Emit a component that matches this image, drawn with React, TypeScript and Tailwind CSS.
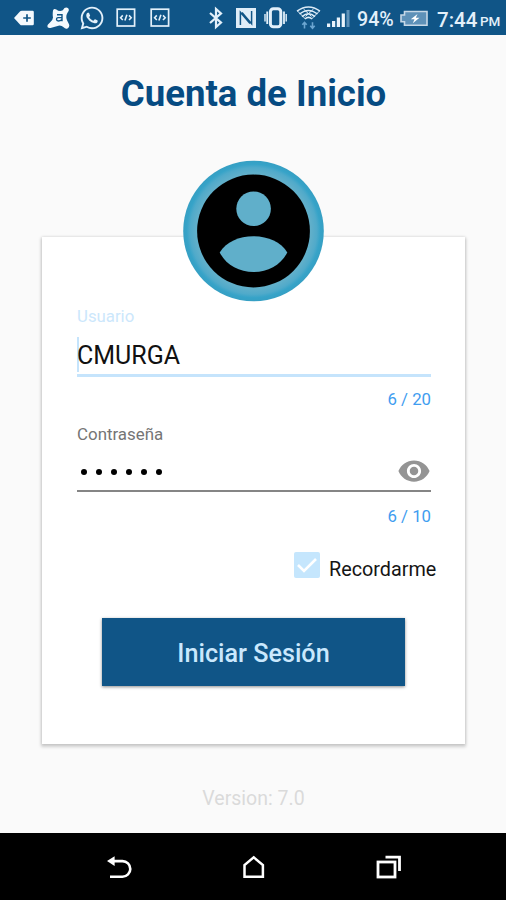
import React from "react";
import { FaWhatsapp } from "react-icons/fa";
import { MdRemoveRedEye } from "react-icons/md";

function CodeIcon({ className }: { className: string }) {
  return (
    <svg className={className} width="20" height="20" viewBox="0 0 20 20" fill="none" stroke="#e3f0fa">
      <rect x="1.2" y="1.2" width="17.4" height="16.8" strokeWidth="1.7" />
      <path d="M6.8 7.4 4.6 9.7 6.8 12M13 7.4 15.2 9.7 13 12M8.9 12.6 10.9 6.8" strokeWidth="1.6" />
    </svg>
  );
}

function StatusBar() {
  return (
    <div className="flex h-[35px] items-center bg-[#105587] pt-px text-[#e3f0fa]">
      <svg className="ml-[14px] shrink-0" width="20" height="16" viewBox="0 0 20 16">
        <path d="M0 8 6.2 1.3Q6.8.7 7.8.7H18.6Q19.8.7 19.8 2V14Q19.8 15.3 18.6 15.3H7.8Q6.8 15.3 6.2 14.7Z" fill="#f4f9fd" />
        <path d="M13 4.2V11.8M9.2 8H16.8" stroke="#105587" strokeWidth="1.7" />
      </svg>
      <svg className="ml-[13px] shrink-0" width="23" height="23" viewBox="0 0 23 23">
        <path d="M6 3.4Q7 1.2 9.3 2.5Q12.6 5.2 15.8 3.3L17.5 1Q19.5-.2 21.2 1.3Q22.7 3.3 20.8 5.3L20 6.8Q18.6 10 20 13.2L22 17.3Q23 20.2 20.5 21.5Q18.4 22.4 16.6 20.3Q14.5 18.2 11.5 18.7L3.5 21Q.3 21.5.3 19Q.3 17.4 3 15.4Q5.8 13.5 6 10.5Q5.4 7.5 6 3.4Z" fill="#f4f9fd" />
        <path d="M10 7.8H15V14.2M15 10.6H11Q9.4 10.8 9.5 12.3Q9.6 14 11.3 14Q13.4 14 15 12.4" fill="none" stroke="#105587" strokeWidth="1.4" />
      </svg>
      <FaWhatsapp className="ml-[9px] shrink-0" size={26} />
      <CodeIcon className="ml-[11px] shrink-0" />
      <CodeIcon className="ml-[14px] shrink-0" />
      <svg className="ml-[34px] shrink-0" width="24" height="24" viewBox="0 0 24 24" fill="none" stroke="#e3f0fa" strokeWidth="2.2">
        <path d="M6 7 17 16.6 12 21V3L17 7.4 6 17" />
      </svg>
      <svg className="ml-[8px] shrink-0" width="20" height="20" viewBox="0 0 20 20">
        <rect width="20" height="20" fill="#dfedf8" />
        <path d="M4.4 17V4.2L14 15.5M15.6 3V15.8L6 4.5" fill="none" stroke="#105587" strokeWidth="1.5" />
      </svg>
      <svg className="ml-[8px] shrink-0" width="23" height="22" viewBox="0 0 23 22" fill="none" stroke="#e3f0fa">
        <rect x="6.4" y="1.8" width="10.4" height="18" rx="3" strokeWidth="3" />
        <path d="M3.2 4.5V17M20 4.5V17" strokeWidth="1.8" />
        <path d="M1 7V14.5M22.2 7V14.5" strokeWidth="1.4" />
      </svg>
      <svg className="ml-[9px] shrink-0" width="25" height="24" viewBox="0 0 25 24" fill="none" stroke="#dcebf7">
        <path d="M1 5.2Q12.5-3 24 5.2M3.5 8Q12.5.8 21.5 8M6 10.6Q12.5 5 19 10.6M9 13Q12.5 9.7 16 13" strokeWidth="1.5" />
        <path d="M1.5 5 9.5 13M23.5 5 15.5 13M7.5 3 15.5 10.5M17.5 3 9.5 10.5" strokeWidth="1" />
        <path d="M8.5 22.5V16.7M6.3 18.8 8.5 16.5 10.7 18.8M16.5 16.3V22M14.3 19.8 16.5 22.2 18.7 19.8" stroke="#6ca6d1" strokeWidth="1.6" />
      </svg>
      <svg className="ml-[5px] shrink-0" width="25" height="19" viewBox="0 0 25 19" fill="#e9f3fb">
        <path d="M1 14.5H4.2V18H1ZM6 12H9.2V18H6ZM10.8 8.5H14V18H10.8ZM15.7 4.5H18.9V18H15.7Z" />
        <path d="M20.5 1H23.5V18H20.5Z" fill="#5d91b8" />
      </svg>
      <span className="ml-[6px] mt-[3px] w-[43px] whitespace-nowrap text-[19.6px] font-medium leading-[24px]">94%</span>
      <svg className="shrink-0" width="29" height="17" viewBox="0 0 29 17">
        <path d="M4.5 1.5H27V15.3H4.5V11.8H1V5H4.5Z" fill="#5e91b8" stroke="#c6d8e6" strokeWidth="1.6" />
        <path d="M17.5 4 10.8 9.2H14.5L12.8 13.2 19.5 7.8H15.8Z" fill="#fff" />
      </svg>
      <span className="ml-[8px] mt-[3px] w-[43px] whitespace-nowrap text-[20.5px] font-medium leading-[24px]">7:44</span>
      <span className="mt-[6px] whitespace-nowrap text-[13.5px] font-medium leading-[16px]">PM</span>
    </div>
  );
}

function Avatar() {
  return (
    <svg className="absolute left-[140px] top-[-77px]" width="142" height="142" viewBox="0 0 142 142">
      <defs>
        <radialGradient id="ring">
          <stop offset=".82" stopColor="#60afca" />
          <stop offset=".9" stopColor="#50aaca" />
          <stop offset=".95" stopColor="#36a3c8" />
          <stop offset="1" stopColor="#369fc3" />
        </radialGradient>
      </defs>
      <circle cx="71.5" cy="71" r="70.3" fill="url(#ring)" />
      <circle cx="71.5" cy="71" r="56.4" fill="#000" />
      <circle cx="71.6" cy="48.8" r="17.3" fill="#60afca" />
      <path d="M37.7 92.5C44 82 57 76.3 71.5 76.3S99 82 105.3 92.5C99 105 86 112 71.5 112S44 105 37.7 92.5Z" fill="#60afca" />
    </svg>
  );
}

function NavigationBar() {
  return (
    <div className="flex h-[67px] items-center bg-black">
      <svg className="ml-[106px]" width="26" height="26" viewBox="0 0 26 26">
        <path d="M7 7.1H16.5A7.8 7.8 0 0 1 16.5 22.7H4" fill="none" stroke="#fff" strokeWidth="2.6" />
        <path d="M1 7.1 8.6 2.3V11.9Z" fill="#fff" />
      </svg>
      <svg className="ml-[109px]" width="26" height="26" viewBox="0 0 26 26">
        <path d="M3.5 22.7V11L12.7 3.3 21.9 11V22.7Z" fill="none" stroke="#fff" strokeWidth="2.5" />
      </svg>
      <svg className="ml-[108px]" width="28" height="26" viewBox="0 0 28 26" fill="none" stroke="#fff">
        <rect x="3" y="8" width="17" height="15" strokeWidth="2.8" />
        <path d="M10.5 3.2H24.5V17" strokeWidth="2.8" />
      </svg>
    </div>
  );
}

export default function App() {
  return (
    <div className="flex h-[900px] w-[506px] flex-col overflow-hidden bg-[#fafafa] font-[Roboto,sans-serif]">
      <StatusBar />
      <main className="flex flex-1 flex-col items-center">
        <h1 className="mt-[38px] whitespace-nowrap pl-px text-[36.6px] font-bold leading-[42px] text-[#064b82]">Cuenta de Inicio</h1>
        <section className="relative ml-[1px] mt-[122px] flex h-[507px] w-[423px] shrink-0 flex-col bg-white px-[35px] pt-[69px] shadow-[0_2px_3px_1px_rgba(0,0,0,0.17),0_0_3px_rgba(0,0,0,0.12)]">
          <Avatar />
          <label className="w-max text-[16.8px] leading-[20px] text-[#cce7fc]">Usuario</label>
          <div className="mt-[9px] flex h-[42px] w-[354px] items-center border-b-[3px] border-[#c5e4fc]">
            <span className="-mt-px h-[35px] w-[2px] bg-[#c5e4fc]" />
            <span className="-ml-[2px] mt-[2px] text-[25px] leading-[30px] text-[#111]">CMURGA</span>
          </div>
          <span className="mt-[12px] w-[354px] text-right text-[16.8px] leading-[20px] text-[#3f9df0]">6 / 20</span>
          <label className="mt-[15px] w-max text-[16.9px] leading-[20px] text-[#757575]">Contraseña</label>
          <div className="mt-[9px] flex h-[39px] w-[354px] items-center justify-between border-b-2 border-[#858585]">
            <div className="ml-[4px] flex gap-[9px]">
              {[0, 1, 2, 3, 4, 5].map((i) => (
                <span key={i} className="size-[6px] rounded-full bg-black" />
              ))}
            </div>
            <MdRemoveRedEye className="-mt-[2px]" size={34} color="#949494" />
          </div>
          <span className="mt-[14px] w-[354px] text-right text-[16.8px] leading-[20px] text-[#3f9df0]">6 / 10</span>
          <div className="ml-[217px] mt-[26px] flex h-[30px] items-start">
            <svg className="shrink-0" width="26" height="26" viewBox="0 0 26 26">
              <rect width="26" height="26" rx="2" fill="#c5e6fd" />
              <path d="M4 13 10 19 22 7" fill="none" stroke="#fff" strokeWidth="2.6" />
            </svg>
            <span className="ml-[9px] mt-[6px] whitespace-nowrap text-[19.8px] leading-[24px] text-[#151515]">Recordarme</span>
          </div>
          <button className="ml-[25px] mt-[36px] h-[68px] w-[303px] shrink-0 bg-[#105587] pt-[3px] text-[25.2px] font-medium leading-[30px] text-[#cae8fd] shadow-[0_1px_3px_rgba(0,0,0,0.45)]">
            Iniciar Sesión
          </button>
        </section>
        <p className="mt-[43px] whitespace-nowrap pl-[1px] text-[19.5px] leading-[24px] text-[#dadada]">Version: 7.0</p>
      </main>
      <NavigationBar />
    </div>
  );
}
